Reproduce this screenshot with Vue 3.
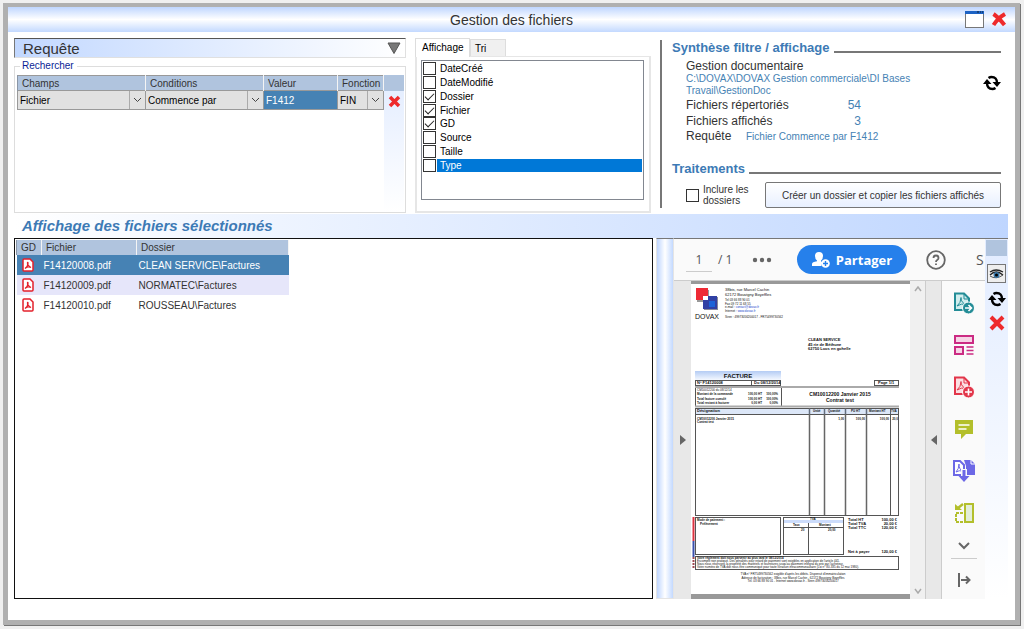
<template>
  <div class="desktop">
    <main class="window">
      <header class="title-bar">
        <h1>Gestion des fichiers</h1>
        <div class="title-actions">
          <button class="plain" aria-label="Agrandir">
            <svg width="19" height="17" viewBox="0 0 19 17">
              <rect x="0.5" y="0.5" width="18" height="16" fill="#fff" stroke="#777" />
              <rect x="0" y="0" width="19" height="3" fill="#1c62c4" />
              <path d="M12 1h2M15 1h1M17 1h1" stroke="#123" />
            </svg>
          </button>
          <button class="plain" aria-label="Fermer">
            <svg width="16" height="15" viewBox="0 0 16 15">
              <path d="M2.5 2Q7 5 13.5 13M14 2Q7 6 2.5 13" stroke="#ee2a2c" stroke-width="4" fill="none" />
            </svg>
          </button>
        </div>
      </header>

      <div class="content">
        <section class="top">
          <div class="query">
            <button class="query-title">
              <span>Requête</span>
              <svg width="14" height="12" viewBox="0 0 14 12"><path d="M1 1h12L7 11.500z" fill="#787878" stroke="#555" /></svg>
            </button>
            <fieldset class="search">
              <legend>Rechercher</legend>
              <table class="criteria">
                <thead>
                  <tr>
                    <th class="c-champ">Champs</th>
                    <th class="c-cond">Conditions</th>
                    <th class="c-val">Valeur</th>
                    <th class="c-fn">Fonction</th>
                  </tr>
                </thead>
                <tbody>
                  <tr>
                    <td>
                      <div class="combo">
                        <select v-model="champ" aria-label="Champs"><option>Fichier</option></select>
                        <svg width="9" height="6" viewBox="0 0 9 6"><path d="M1 1l3.500 3.500L8 1" fill="none" stroke="#444" /></svg>
                      </div>
                    </td>
                    <td>
                      <div class="combo">
                        <select v-model="condition" aria-label="Conditions"><option>Commence par</option></select>
                        <svg width="9" height="6" viewBox="0 0 9 6"><path d="M1 1l3.500 3.500L8 1" fill="none" stroke="#444" /></svg>
                      </div>
                    </td>
                    <td class="selected"><input v-model="valeur" aria-label="Valeur" /></td>
                    <td>
                      <div class="combo">
                        <select v-model="fonction" aria-label="Fonction"><option>FIN</option></select>
                        <svg width="9" height="6" viewBox="0 0 9 6"><path d="M1 1l3.500 3.500L8 1" fill="none" stroke="#444" /></svg>
                      </div>
                    </td>
                  </tr>
                </tbody>
              </table>
              <div class="side-strip">
                <div class="strip-head"></div>
                <button class="plain" aria-label="Supprimer le critère">
                  <svg width="13" height="13" viewBox="0 0 13 13">
                    <path d="M2 2l9 9M11 2l-9 9" stroke="#ee2a2c" stroke-width="3.500" />
                  </svg>
                </button>
              </div>
            </fieldset>
          </div>

          <div class="tabs">
            <div class="tab-row" role="tablist">
              <button role="tab" class="tab active" aria-selected="true">Affichage</button>
              <button role="tab" class="tab" aria-selected="false">Tri</button>
            </div>
            <div class="tab-panel">
              <div class="check-box">
                <ul>
                  <li v-for="c in colonnes" :key="c.nom">
                    <label :class="{ current: c.nom === 'Type' }">
                      <input v-model="c.visible" type="checkbox" />
                      <span>{{ c.nom }}</span>
                    </label>
                  </li>
                </ul>
              </div>
            </div>
          </div>

          <div class="summary">
            <h2 class="ruled">Synthèse filtre / affichage</h2>
            <div class="summary-body">
              <dl>
                <div class="stacked">
                  <dt>Gestion documentaire</dt>
                  <dd>C:\DOVAX\DOVAX Gestion commerciale\DI Bases Travail\GestionDoc</dd>
                </div>
                <div class="count"><dt>Fichiers répertoriés</dt><dd>54</dd></div>
                <div class="count"><dt>Fichiers affichés</dt><dd>3</dd></div>
                <div class="request"><dt>Requête</dt><dd>Fichier Commence par F1412</dd></div>
              </dl>
              <button class="plain refresh" aria-label="Actualiser">
                <svg width="18" height="16" viewBox="0 0 18 16">
                  <path d="M4 8q0 6 5.500 6q1.500 0 3-1M14 8q0-6-5.500-6Q7 2 5.500 3" fill="none" stroke="#000" stroke-width="2.400" />
                  <path d="M0 9l4-5 4.500 5zM9.500 7H18l-4 5z" fill="#000" />
                </svg>
              </button>
            </div>
            <h2 class="ruled">Traitements</h2>
            <div class="actions">
              <label><input v-model="inclure" type="checkbox" /><span>Inclure les dossiers</span></label>
              <button>Créer un dossier et copier les fichiers affichés</button>
            </div>
          </div>
        </section>

        <h2 class="banner">Affichage des fichiers sélectionnés</h2>

        <section class="bottom">
          <div class="files">
            <table>
              <thead>
                <tr><th class="c-gd">GD</th><th class="c-file">Fichier</th><th class="c-dir">Dossier</th></tr>
              </thead>
              <tbody>
                <tr v-for="(f, i) in fichiers" :key="f.nom" :class="{ selected: i === 0 }">
                  <td class="c-gd">
                    <svg width="12" height="14" viewBox="0 0 12 14">
                      <path d="M2 1h6l3 3v8q0 1-1 1H2q-1 0-1-1V2q0-1 1-1z" fill="#fff" stroke="#e3202b" stroke-width="1.500" />
                      <path d="M3 10.500q3-2 3-5.500q0-1-.5-.5Q5 7 9 9.500Q6 8 3 10.500z" fill="none" stroke="#e3202b" stroke-width="1.300" />
                    </svg>
                  </td>
                  <td>{{ f.nom }}</td>
                  <td>{{ f.dossier }}</td>
                </tr>
              </tbody>
            </table>
          </div>

          <div class="splitter"></div>

          <div class="viewer">
            <div class="viewer-bar">
              <input v-model="page" class="page-no" aria-label="Page" />
              <span class="page-count">/ 1</span>
              <button class="plain dots" aria-label="Plus">
                <svg width="20" height="6" viewBox="0 0 20 6" fill="#666"><circle cx="3" cy="3" r="2.200" /><circle cx="10" cy="3" r="2.200" /><circle cx="17" cy="3" r="2.200" /></svg>
              </button>
              <button class="share">
                <svg width="18" height="16" viewBox="0 0 18 16">
                  <path d="M7 0q4 0 4 4q0 3-2 4.500v1l2 .8q-2 1.700-1.500 3.700H0v-2q0-2 5-2.700V8.500Q3 7 3 4q0-4 4-4z" fill="#fff" />
                  <circle cx="13.500" cy="11.500" r="4.300" fill="#fff" />
                  <path d="M13.500 9v5M11 11.500h5" stroke="#2680eb" stroke-width="1.400" />
                </svg>
                <span>Partager</span>
              </button>
              <button class="plain help" aria-label="Aide">
                <svg width="20" height="20" viewBox="0 0 20 20" fill="none" stroke="#666" stroke-width="1.800">
                  <circle cx="10" cy="10" r="8.800" />
                  <path d="M7.500 8q0-2.500 2.500-2.500T12.500 8q0 1.200-1.300 2T10 12M10 13.500v1.500" />
                </svg>
              </button>
              <span class="cut">S</span>
            </div>

            <div class="viewer-body">
              <button class="gutter left" aria-label="Volet gauche">
                <svg width="6" height="10" viewBox="0 0 6 10"><path d="M0 0l6 5-6 5z" fill="#666" /></svg>
              </button>

              <div class="page-area">
                <svg class="invoice" viewBox="0 0 219 310">
                  <defs>
                    <linearGradient id="band" x2="0" y2="1">
                      <stop offset="0" stop-color="#b4ccf4" />
                      <stop offset="1" stop-color="#f4f8ff" />
                    </linearGradient>
                  </defs>
                  <rect width="219" height="310" fill="#fff" />
                  <rect x="6" y="6" width="12" height="12" fill="#999" />
                  <rect x="5" y="4" width="12" height="12" fill="#ee2a35" />
                  <rect x="13" y="13" width="14" height="13" fill="#889" />
                  <rect x="12" y="12" width="14" height="13" fill="#3040a4" />
                  <rect x="18" y="17" width="6" height="6" fill="#1c62d8" />
                  <rect x="12" y="12" width="5" height="4" fill="#fff" />
                  <text x="4" y="35" class="t7">DOVAX</text>
                  <text x="34" y="7" class="t4">38bis, rue Marcel Cachin</text>
                  <text x="34" y="12" class="t4">62172 Bouvigny Boyeffles</text>
                  <text x="34" y="17" class="t3">Tel 03 66 88 90 01</text>
                  <text x="34" y="21" class="t3">Fax 09 72 11 68 55</text>
                  <text x="34" y="24" class="t3">e-mail : <tspan fill="#2244cc">contact@dovax.fr</tspan></text>
                  <text x="34" y="28" class="t3">Internet : <tspan fill="#2244cc">www.dovax.fr</tspan></text>
                  <text x="34" y="34" class="t3">Siren : 49973056200017 - FR75499730562</text>
                  <g class="t4 b">
                    <text x="117" y="57">CLEAN SERVICE</text>
                    <text x="117" y="62">45 rie de Béthune</text>
                    <text x="117" y="66">62750 Loos en gohelle</text>
                  </g>
                  <rect x="4" y="87" width="86" height="9" fill="url(#band)" />
                  <text x="47" y="94" class="t6 b mid">FACTURE</text>
                  <g fill="none" stroke="#555">
                    <rect x="4.500" y="96.500" width="85" height="5" />
                    <path d="M60.500 96v6" />
                    <rect x="183.500" y="96.500" width="24" height="5" />
                    <path d="M4.500 103v20M90.500 103v20" />
                    <rect x="4.500" y="124.500" width="203" height="107" />
                    <path d="M4 130.500h203M199.500 124v107" />
                    <rect x="4.500" y="233.500" width="85" height="37" />
                    <rect x="92.500" y="233.500" width="60" height="37" />
                    <path d="M92 243.500h60M117.500 239v31" />
                    <rect x="4.500" y="272.500" width="203" height="13" />
                  </g>
                  <path d="M4 103h204M4 122.500h204" stroke="#aaa" stroke-width="2" />
                  <path d="M118.500 124v107M133.500 124v107M154.500 124v107M175.500 124v107" stroke="#666" stroke-width="1.500" />
                  <rect x="5" y="125" width="202" height="5" fill="#6090e0" opacity=".22" />
                  <rect x="93" y="236" width="59" height="3" fill="#ccdcfb" />
                  <g class="t3 b">
                    <text x="6" y="100" class="t4">N° F14120008</text>
                    <text x="63" y="100" class="t4">Du 08/12/2014</text>
                    <text x="187" y="100" class="t4">Page 1/1</text>
                    <text x="6" y="107" font-weight="normal">CM10012200 du 08/12/14</text>
                    <text x="6" y="111">Montant de la commande</text>
                    <text x="6" y="116">Total facture cumulé</text>
                    <text x="6" y="120">Total restant à facturer</text>
                    <g class="end">
                      <text x="71" y="111">100,00 HT</text><text x="87" y="111">100,00%</text>
                      <text x="71" y="116">100,00 HT</text><text x="87" y="116">100,00%</text>
                      <text x="71" y="120">0,00 HT</text><text x="87" y="120">0,00%</text>
                    </g>
                    <text x="6" y="128" class="t4">Désignation</text>
                    <text x="122" y="128">Unité</text>
                    <text x="137" y="128">Quantité</text>
                    <text x="160" y="128">PU HT</text>
                    <text x="178" y="128">Montant HT</text>
                    <text x="200" y="128">TVA</text>
                    <text x="6" y="136">CM10012200 Janvier 2015</text>
                    <text x="6" y="139">Contrat test</text>
                    <g class="end">
                      <text x="153" y="136">1,00</text><text x="174" y="136">100,00</text>
                      <text x="198" y="136">100,00</text><text x="207" y="136">20,0</text>
                    </g>
                    <text x="6" y="237">Mode de paiement :</text>
                    <text x="9" y="241">Prélèvement</text>
                    <text x="119" y="236">TVA</text>
                    <text x="102" y="242">Taux</text>
                    <text x="128" y="242">Montant</text>
                    <text x="110" y="247">20</text>
                    <text x="137" y="247">20,00</text>
                    <text x="6" y="275">Votre règlement doit nous parvenir au plus tard le 08/12/2014</text>
                    <text x="6" y="278" font-weight="normal">Escompte non pratiqué. Des pénalités pour retard de paiement sont exigibles en application de l'article 441.</text>
                    <text x="6" y="281" font-weight="normal">Nous nous réservons la propriété des matériels et fournitures jusqu'au paiement intégral du prix par l'acheteur.</text>
                    <text x="6" y="284" font-weight="normal">Votre numéro de TVA doit nous être communiqué pour toute livraison intracommunautaire (Loi n° 80-335 du 12 mai 1980).</text>
                  </g>
                  <text x="149" y="112" class="t5 b mid">CM10012200 Janvier 2015</text>
                  <text x="149" y="118" class="t5 b mid">Contrat test</text>
                  <g class="t4 b">
                    <text x="157" y="237">Total HT</text><text x="206" y="237" class="end">100,00 €</text>
                    <text x="157" y="241">Total TVA</text><text x="206" y="241" class="end">20,00 €</text>
                    <text x="157" y="245">Total TTC</text><text x="206" y="245" class="end">120,00 €</text>
                    <text x="157" y="269">Net à payer</text><text x="206" y="269" class="end">120,00 €</text>
                  </g>
                  <g class="t3 mid">
                    <text x="102" y="291">TVA n° FR75499730562 exigible d'après les débits. Dispensé d'immatriculation</text>
                    <text x="102" y="295">Adresse de facturation : 38bis, rue Marcel Cachin - 62172 Bouvigny Boyeffles</text>
                    <text x="102" y="298">Tél. 03 66 88 90 01 - Internet www.dovax.fr - Siren 49973056200017</text>
                  </g>
                  <path d="M2.500 233v24" stroke="#dc3340" stroke-width="2" />
                  <path d="M2.500 257v16" stroke="#3a50ac" stroke-width="2" />
                  <path d="M2.500 273v11" stroke="#a04a52" stroke-width="2" stroke-dasharray="2 1" />
                </svg>
              </div>

              <div class="scrollbar">
                <svg width="8" height="6" viewBox="0 0 8 6"><path d="M1 5l3-4 3 4" fill="none" stroke="#aaa" stroke-width="1.500" /></svg>
                <svg width="8" height="6" viewBox="0 0 8 6"><path d="M1 1l3 4 3-4" fill="none" stroke="#aaa" stroke-width="1.500" /></svg>
              </div>
              <button class="gutter right" aria-label="Volet droit">
                <svg width="6" height="10" viewBox="0 0 6 10"><path d="M6 0L0 5l6 5z" fill="#666" /></svg>
              </button>

              <nav class="tools">
                <button class="plain" aria-label="Exporter">
                  <svg width="22" height="22" viewBox="0 0 22 22">
                    <path d="M2 1.500h9l5 5V18H2z" fill="#d3eeee" stroke="#238c96" stroke-width="2" />
                    <path d="M11 2v5h5" fill="none" stroke="#238c96" />
                    <path d="M4 14q4-3 4-8.500q0 6 6 7Q8 11 4 14z" fill="none" stroke="#238c96" />
                    <circle cx="15.500" cy="16" r="6" fill="#238c96" stroke="#fff" />
                    <path d="M12 16h6M15.500 13l3 3-3 3" fill="none" stroke="#fff" stroke-width="1.600" />
                  </svg>
                </button>
                <button class="plain" aria-label="Organiser les pages">
                  <svg width="22" height="22" viewBox="0 0 22 22">
                    <g fill="#f6d5e6" stroke="#cb2b83" stroke-width="2"><rect x="2" y="2" width="18" height="7" /><rect x="2" y="13" width="8" height="7" /></g>
                    <path d="M13.500 13h7M13.500 16.500h7M13.500 20h7" stroke="#cb2b83" stroke-width="1.500" />
                  </svg>
                </button>
                <button class="plain" aria-label="Créer un PDF">
                  <svg width="22" height="22" viewBox="0 0 22 22">
                    <path d="M2 1.500h9l5 5V18H2z" fill="#fbdfe2" stroke="#e2364a" stroke-width="2" />
                    <path d="M11 2v5h5" fill="none" stroke="#e2364a" />
                    <path d="M4 14q4-3 4-8.500q0 6 6 7Q8 11 4 14z" fill="none" stroke="#e2364a" />
                    <circle cx="15.500" cy="16" r="6" fill="#e2364a" stroke="#fff" />
                    <path d="M12 16h7M15.500 12.500v7" stroke="#fff" stroke-width="1.600" />
                  </svg>
                </button>
                <button class="plain" aria-label="Commentaire">
                  <svg width="22" height="22" viewBox="0 0 22 22">
                    <path d="M2 2h18v14h-7l-5 5v-5H2z" fill="#b3bf2b" />
                    <path d="M5.500 7h11M5.500 11h8" stroke="#fff" stroke-width="1.600" />
                  </svg>
                </button>
                <button class="plain" aria-label="Combiner les fichiers">
                  <svg width="24" height="22" viewBox="0 0 24 22">
                    <path d="M12 0h7l4 4v11h-9V6z" fill="#6c68e6" />
                    <path d="M19 0v4h4" fill="none" stroke="#fff" />
                    <path d="M2 1h6l4 4v10H2z" fill="#fff" stroke="#6c68e6" stroke-width="2" />
                    <path d="M4 12q3-3 3-8q0 6 4 7Q7 10 4 12z" fill="none" stroke="#6c68e6" />
                    <path d="M12 9v7" stroke="#fafafa" stroke-width="6" />
                    <path d="M12 10v8" stroke="#6c68e6" stroke-width="3" />
                    <path d="M6.500 16h11L12 22z" fill="#6c68e6" />
                  </svg>
                </button>
                <button class="plain" aria-label="Comparer">
                  <svg width="22" height="22" viewBox="0 0 22 22" fill="none" stroke="#b3bf2b">
                    <rect x="12" y="2" width="8" height="18" fill="#e3eed8" stroke-width="2" />
                    <path d="M10 11H3v9h7" stroke-width="2" stroke-dasharray="3 1" />
                    <path d="M10 2L5 6" stroke-width="2.500" />
                    <path d="M2 2v6h7z" fill="#b3bf2b" stroke="none" />
                  </svg>
                </button>
                <button class="plain more" aria-label="Plus d'outils">
                  <svg width="12" height="8" viewBox="0 0 12 8"><path d="M1 1l5 5 5-5" fill="none" stroke="#666" stroke-width="2" /></svg>
                </button>
                <hr />
                <button class="plain" aria-label="Réduire">
                  <svg width="14" height="16" viewBox="0 0 14 16" fill="none" stroke="#666" stroke-width="2"><path d="M2 1v14M4 8h8M9 4.500L12.500 8 9 11.500" /></svg>
                </button>
              </nav>
            </div>
          </div>

          <div class="side-strip tall">
            <div class="strip-head"></div>
            <button class="eye" aria-label="Aperçu">
              <svg width="15" height="12" viewBox="0 0 15 12">
                <path d="M1 4Q7 0 14 4M1 7q6-6 13 0" fill="none" stroke="#222" stroke-width="1.300" />
                <path d="M1 8q6 4 13-1" fill="none" stroke="#555" />
                <circle cx="7.500" cy="7" r="3" fill="#3a78a8" />
                <circle cx="7.500" cy="7" r="1.500" fill="#000" />
              </svg>
            </button>
            <button class="plain" aria-label="Actualiser l'aperçu">
              <svg width="18" height="16" viewBox="0 0 18 16">
                <path d="M4 8q0 6 5.500 6q1.500 0 3-1M14 8q0-6-5.500-6Q7 2 5.500 3" fill="none" stroke="#000" stroke-width="2.400" />
                <path d="M0 9l4-5 4.500 5zM9.500 7H18l-4 5z" fill="#000" />
              </svg>
            </button>
            <button class="plain" aria-label="Supprimer">
              <svg width="16" height="16" viewBox="0 0 16 16">
                <path d="M2 2l12 12M14 2L2 14" stroke="#ee2a2c" stroke-width="4" />
              </svg>
            </button>
          </div>
        </section>
      </div>
    </main>
  </div>
</template>

<script setup>
import { ref } from 'vue'

const champ = ref('Fichier')
const condition = ref('Commence par')
const valeur = ref('F1412')
const fonction = ref('FIN')
const inclure = ref(false)
const page = ref('1')

const colonnes = ref([
  { nom: 'DateCréé', visible: false },
  { nom: 'DateModifié', visible: false },
  { nom: 'Dossier', visible: true },
  { nom: 'Fichier', visible: true },
  { nom: 'GD', visible: true },
  { nom: 'Source', visible: false },
  { nom: 'Taille', visible: false },
  { nom: 'Type', visible: false }
])

const fichiers = [
  { nom: 'F14120008.pdf', dossier: 'CLEAN SERVICE\\Factures' },
  { nom: 'F14120009.pdf', dossier: 'NORMATEC\\Factures' },
  { nom: 'F14120010.pdf', dossier: 'ROUSSEAU\\Factures' }
]
</script>

<style>
body {
  background: #f0f0f0;
}
</style>

<style scoped>
* {
  box-sizing: border-box;
}
.desktop {
  display: flex;
  min-height: 100vh;
  padding: 3px 4px 4px 3px;
  font-family: "Liberation Sans", Arial, sans-serif;
  font-size: 10px;
  color: #333;
}
.window {
  flex: 1;
  min-width: 0;
  display: flex;
  flex-direction: column;
  background: #fff;
  border: 5px solid #b0b0b0;
  border-top-width: 4px;
  box-shadow: 1px 1px 0 #777;
}
h1, h2, dl, dd, ul, fieldset {
  margin: 0;
  padding: 0;
}
button, input, select {
  font: inherit;
  color: inherit;
  margin: 0;
}
svg {
  display: block;
  flex: none;
}
.plain {
  border: 0;
  padding: 0;
  background: none;
}
.title-bar {
  display: grid;
  grid-template-columns: 1fr auto 1fr;
  align-items: center;
  height: 25px;
  background: linear-gradient(#bfd6ff, #fff 50%, #c3d9ff);
}
.title-bar h1 {
  grid-column: 2;
  font-size: 14px;
  font-weight: normal;
}
.title-actions {
  display: flex;
  justify-content: flex-end;
  align-items: center;
  gap: 7px;
  padding-right: 8px;
}
.content {
  flex: 1;
  display: flex;
  flex-direction: column;
  padding: 6px 7px 21px 6px;
}
.top {
  display: flex;
  height: 175px;
}
.query {
  flex: 1;
  display: flex;
  flex-direction: column;
  min-width: 0;
}
.query-title {
  display: flex;
  align-items: center;
  justify-content: space-between;
  height: 20px;
  padding: 0 4px 0 8px;
  border: 1px solid #e0e0e0;
  border-top-color: #555;
  border-left-color: #777;
  background: linear-gradient(90deg, #c2d8ff, #fff);
  font-size: 15px;
}
.search {
  flex: 1;
  position: relative;
  display: flex;
  align-items: stretch;
  margin-top: 2px;
  padding: 3px 1px 0 2px;
  border: 1px solid #ddd;
  min-width: 0;
}
.search legend {
  margin-left: 3px;
  padding: 0 3px 0 2px;
  line-height: 12px;
  color: #0a1e96;
}
table {
  border-collapse: collapse;
}
th {
  padding: 0 0 0 4px;
  text-align: left;
  font-weight: normal;
  background: #b0c4de;
  border-right: 1px solid #f4f4f4;
  border-left: 1px solid #8a96a6;
  white-space: nowrap;
}
.criteria {
  flex: 1;
  align-self: flex-start;
  table-layout: fixed;
  border: 1px solid #999;
}
.criteria th {
  height: 15px;
}
.criteria td {
  height: 19px;
  padding: 0;
  background: #e1e1e1;
  border: 1px solid #999;
  color: #000;
}
.c-champ { width: 128px; }
.c-cond { width: 118px; }
.c-val { width: 74px; }
.c-fn { width: 46px; }
.combo {
  display: grid;
  grid-template-columns: 1fr 15px;
  align-items: center;
  justify-items: center;
}
.combo select {
  grid-area: 1 / 1 / 2 / 3;
  width: 100%;
  height: 18px;
  padding: 0 16px 0 2px;
  border: 0;
  appearance: none;
  background: linear-gradient(#aaa, #aaa) right 15px top / 1px 100% no-repeat;
}
.combo svg {
  grid-area: 1 / 2;
  pointer-events: none;
}
.criteria td.selected {
  background: #4682b4;
}
.criteria td.selected input {
  width: 100%;
  height: 18px;
  padding: 0 2px;
  border: 0;
  background: none;
  color: #fff;
}
.side-strip {
  display: flex;
  flex-direction: column;
  align-items: center;
  gap: 4px;
  width: 20px;
  background: linear-gradient(#e2ecff, #fff);
}
.strip-head {
  width: 100%;
  height: 16px;
  background: #b0c4de;
}
.tabs {
  width: 236px;
  margin-left: 9px;
  display: flex;
  flex-direction: column;
}
.tab-row {
  display: flex;
  align-items: flex-end;
}
.tab {
  width: 36px;
  height: 17px;
  padding: 0 4px;
  border: 1px solid #ddd;
  border-bottom: 0;
  background: #f0f0f0;
  color: #000;
  text-align: left;
}
.tab.active {
  width: 55px;
  height: 19px;
  padding: 0 0 2px 6px;
  margin-bottom: -1px;
  border-bottom: 0;
  background: #fff;
  z-index: 1;
}
.tab-panel {
  flex: 1;
  padding: 3px 5px 11px 4px;
  border: 2px solid #e6e6e6;
  border-top-width: 1px;
}
.check-box {
  height: 100%;
  padding: 1px;
  border: 1px solid #828790;
}
.check-box ul {
  display: flex;
  flex-direction: column;
  height: 110px;
  list-style: none;
}
.check-box li {
  flex: 1;
  display: flex;
}
.check-box label {
  flex: 1;
  display: flex;
  align-items: center;
  color: #000;
}
.check-box label span {
  flex: 1;
  margin-left: 1px;
  padding: 0 3px;
  line-height: 13px;
}
.check-box .current span {
  background: #0078d7;
  color: #fff;
}
input[type="checkbox"] {
  appearance: none;
  flex: none;
  width: 13px;
  height: 13px;
  border: 1px solid #333;
  background: #fff;
  display: grid;
  place-items: center;
}
input[type="checkbox"]:checked::before {
  content: "";
  width: 8px;
  height: 4px;
  border: solid #222;
  border-width: 0 0 1px 1px;
  transform: translateY(-1px) rotate(-45deg);
}
.summary {
  width: 348px;
  margin: 2px 0 5px 9px;
  padding: 0 7px 0 10px;
  border-left: 2px solid #777;
  display: flex;
  flex-direction: column;
}
.ruled {
  display: flex;
  align-items: flex-end;
  gap: 4px;
  font-size: 13px;
  line-height: 16px;
  color: #3d7ab5;
}
.ruled::after {
  content: "";
  flex: 1;
  margin-bottom: 3px;
  border-top: 2px solid #777;
}
.summary-body {
  flex: 1;
  display: flex;
  justify-content: space-between;
  align-items: flex-start;
  padding: 3px 0 0 14px;
}
.summary dt {
  font-size: 12px;
  line-height: 14px;
}
.summary dd {
  color: #4682b4;
}
.stacked dd {
  width: 232px;
  line-height: 12px;
}
.count {
  display: flex;
  justify-content: space-between;
  align-items: center;
  width: 175px;
  height: 16px;
}
.count dd {
  font-size: 12px;
}
.request {
  display: flex;
  align-items: center;
}
.request dt {
  width: 60px;
}
.refresh {
  margin-top: 16px;
}
.actions {
  display: flex;
  justify-content: space-between;
  padding: 5px 0 0 14px;
}
.actions label {
  display: flex;
  align-items: center;
  gap: 4px;
}
.actions label span {
  width: 50px;
  line-height: 11px;
}
.actions button {
  width: 236px;
  height: 26px;
  padding: 0;
  border: 1px solid #777;
  border-radius: 2px;
  background: linear-gradient(#fff, #e8f0ff);
}
.banner {
  height: 24px;
  padding-left: 8px;
  margin-top: 1px;
  background: linear-gradient(90deg, #fff, #bfd6ff);
  font-size: 15px;
  font-style: italic;
  line-height: 24px;
  color: #3d7ab5;
}
.bottom {
  flex: 1;
  display: flex;
  min-height: 361px;
}
.files {
  flex: 1;
  min-width: 0;
  padding: 1px;
  border: 1px solid #111;
}
.files th {
  height: 15px;
}
.files td {
  height: 20px;
  padding: 0 0 0 2px;
}
.files td.c-gd {
  padding-left: 5px;
}
.files tbody tr:nth-child(even) {
  background: #e6e6fa;
}
.files tbody tr.selected {
  background: #4682b4;
  color: #fff;
}
.c-gd { width: 25px; }
.c-file { width: 95px; }
.c-dir { width: 152px; }
.splitter {
  width: 18px;
  margin-left: 3px;
  border: 1px solid #e4e4e4;
  border-top-color: #777;
  background: linear-gradient(90deg, #bfd6ff, #fff 50%, #c3d9ff);
}
.viewer {
  width: 311px;
  display: flex;
  flex-direction: column;
  border-top: 1px solid #777;
  background: #fafafa;
}
.viewer-bar {
  display: flex;
  align-items: center;
  height: 42px;
  padding-left: 12px;
  border-bottom: 1px solid #ccc;
  overflow: hidden;
  font-family: "Open Sans", sans-serif;
  font-size: 12px;
  color: #555;
}
.page-no {
  width: 26px;
  height: 24px;
  padding: 0;
  border: 0;
  border-bottom: 1px solid #ccc;
  background: none;
  text-align: center;
}
.page-count {
  width: 20px;
  margin-left: 6px;
}
.dots {
  margin-left: 14px;
}
.share {
  display: flex;
  align-items: center;
  justify-content: center;
  gap: 6px;
  width: 110px;
  height: 29px;
  margin-left: 25px;
  padding: 0;
  border: 0;
  border-radius: 15px;
  background: #2680eb;
  color: #fff;
  font-size: 13px;
  font-weight: 700;
}
.help {
  margin-left: 19px;
}
.cut {
  width: 9px;
  margin-left: auto;
  font-size: 14px;
}
.viewer-body {
  flex: 1;
  display: flex;
}
.gutter {
  display: flex;
  align-items: center;
  justify-content: center;
  width: 17px;
  padding: 0;
  border: 0;
  background: #e8e8e8;
}
.gutter.right {
  border-left: 1px solid #ccc;
  border-right: 1px solid #ccc;
}
.page-area {
  flex: 1;
  display: flex;
  padding: 3px 0 4px;
  background: #999;
}
.invoice {
  flex: 1;
  width: 100%;
  height: 310px;
}
.invoice text { fill: #111; }
.t3 { font-size: 3px; }
.t4 { font-size: 4px; }
.t5 { font-size: 5px; }
.t6 { font-size: 6px; }
.t7 { font-size: 7px; }
.b { font-weight: bold; }
.mid { text-anchor: middle; }
.end { text-anchor: end; }
.scrollbar {
  display: flex;
  flex-direction: column;
  align-items: center;
  justify-content: space-between;
  width: 15px;
  padding: 5px 0;
  background: #f0f0f0;
}
.tools {
  display: flex;
  flex-direction: column;
  align-items: center;
  width: 43px;
  padding-top: 11px;
  gap: 20px;
}
.tools .more {
  margin-top: -2px;
}
.tools hr {
  width: 26px;
  margin: -12px 0 -7px;
  border: 0;
  border-top: 1px solid #ccc;
}
.side-strip.tall {
  width: 23px;
  gap: 8px;
  padding: 1px 1px 0;
  border-top: 1px solid #777;
}
.eye {
  display: flex;
  align-items: center;
  justify-content: center;
  width: 19px;
  height: 19px;
  padding: 0;
  border: 1px solid #777;
  background: #eee;
}
</style>
